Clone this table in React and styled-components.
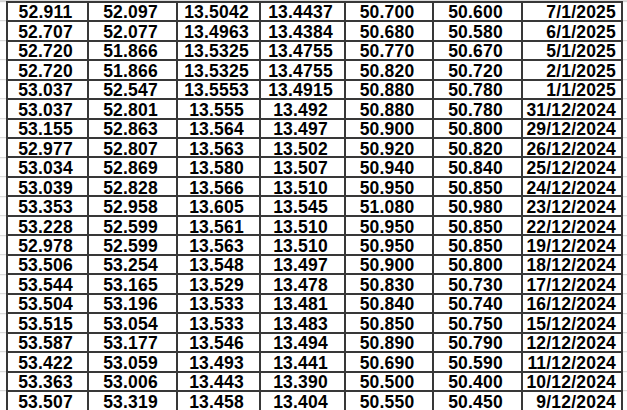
import React from "react";
import styled, { createGlobalStyle } from "styled-components";

const Global = createGlobalStyle`
  html, body {
    margin: 0;
    padding: 0;
    height: 100%;
    overflow: hidden;
    background: #ffffff;
  }
`;

const Sheet = styled.div`
  width: 627px;
  height: 410px;
  overflow: hidden;
  background-image: repeating-linear-gradient(
    to bottom,
    #d4d4d4 0px,
    #d4d4d4 1px,
    transparent 1px,
    transparent 19.47px
  );
  background-position: 0 1.2px;
  padding-top: 0.7px;
  box-sizing: border-box;
`;

const Grid = styled.div`
  display: grid;
  grid-template-columns: 81px 89px 83px 85px 88px 89px 100px;
  grid-auto-rows: 19.47px;
  width: max-content;
  margin-left: 6px;
  border-top: 2px solid #383838;
  border-left: 2px solid #383838;
  background: #ffffff;
`;

const Cell = styled.div`
  box-sizing: border-box;
  border-right: 2px solid #383838;
  border-bottom: 2px solid #383838;
  display: flex;
  align-items: flex-end;
  justify-content: ${(p) => (p.$date ? "flex-end" : "center")};
  padding-right: ${(p) => (p.$date ? "5px" : "4px")};
  padding-bottom: 0.3px;
  font-family: "Liberation Sans", Arial, sans-serif;
  font-weight: 700;
  font-size: 17.5px;
  letter-spacing: 0.2px;
  line-height: 13.5px;
  color: #000000;
  white-space: nowrap;
  overflow: visible;
`;

const rows = [
  ["52.911", "52.097", "13.5042", "13.4437", "50.700", "50.600", "7/1/2025"],
  ["52.707", "52.077", "13.4963", "13.4384", "50.680", "50.580", "6/1/2025"],
  ["52.720", "51.866", "13.5325", "13.4755", "50.770", "50.670", "5/1/2025"],
  ["52.720", "51.866", "13.5325", "13.4755", "50.820", "50.720", "2/1/2025"],
  ["53.037", "52.547", "13.5553", "13.4915", "50.880", "50.780", "1/1/2025"],
  ["53.037", "52.801", "13.555", "13.492", "50.880", "50.780", "31/12/2024"],
  ["53.155", "52.863", "13.564", "13.497", "50.900", "50.800", "29/12/2024"],
  ["52.977", "52.807", "13.563", "13.502", "50.920", "50.820", "26/12/2024"],
  ["53.034", "52.869", "13.580", "13.507", "50.940", "50.840", "25/12/2024"],
  ["53.039", "52.828", "13.566", "13.510", "50.950", "50.850", "24/12/2024"],
  ["53.353", "52.958", "13.605", "13.545", "51.080", "50.980", "23/12/2024"],
  ["53.228", "52.599", "13.561", "13.510", "50.950", "50.850", "22/12/2024"],
  ["52.978", "52.599", "13.563", "13.510", "50.950", "50.850", "19/12/2024"],
  ["53.506", "53.254", "13.548", "13.497", "50.900", "50.800", "18/12/2024"],
  ["53.544", "53.165", "13.529", "13.478", "50.830", "50.730", "17/12/2024"],
  ["53.504", "53.196", "13.533", "13.481", "50.840", "50.740", "16/12/2024"],
  ["53.515", "53.054", "13.533", "13.483", "50.850", "50.750", "15/12/2024"],
  ["53.587", "53.177", "13.546", "13.494", "50.890", "50.790", "12/12/2024"],
  ["53.422", "53.059", "13.493", "13.441", "50.690", "50.590", "11/12/2024"],
  ["53.363", "53.006", "13.443", "13.390", "50.500", "50.400", "10/12/2024"],
  ["53.507", "53.319", "13.458", "13.404", "50.550", "50.450", "9/12/2024"],
];

export default function App() {
  return (
    <>
      <Global />
      <Sheet>
        <Grid>
          {rows.map((r, i) =>
            r.map((v, j) => (
              <Cell key={`${i}-${j}`} $date={j === 6}>
                {v}
              </Cell>
            ))
          )}
        </Grid>
      </Sheet>
    </>
  );
}
